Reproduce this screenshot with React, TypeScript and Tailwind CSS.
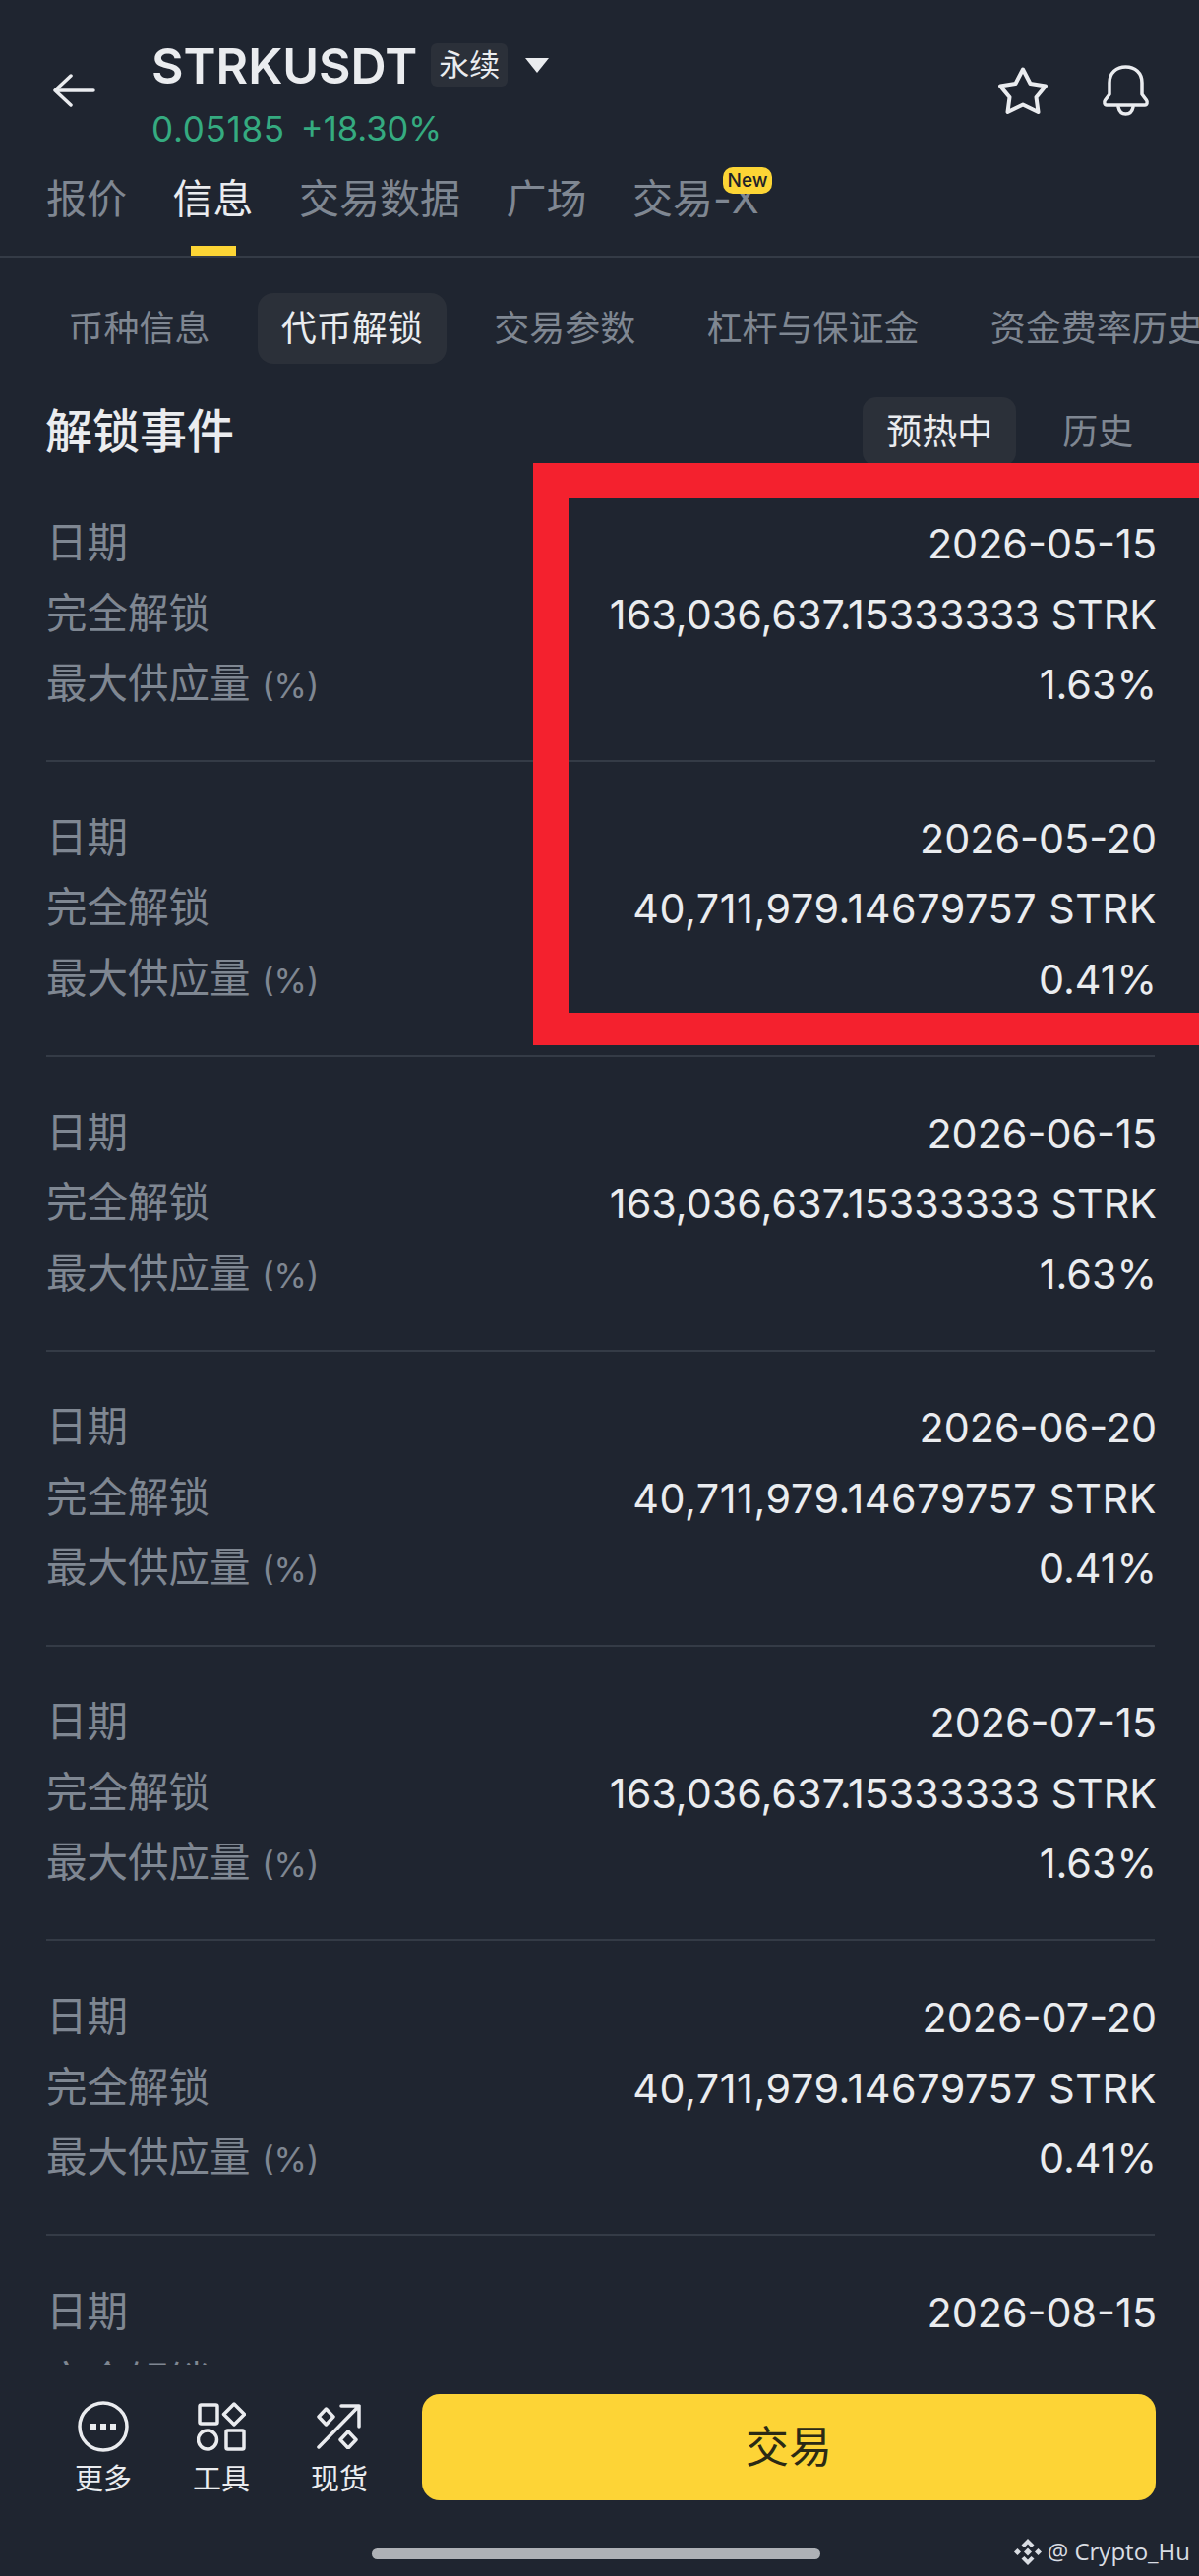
import React from 'react';

const unlocks = [
  { date: '2026-05-15', amount: '163,036,637.15333333 STRK', pct: '1.63%' },
  { date: '2026-05-20', amount: '40,711,979.14679757 STRK', pct: '0.41%' },
  { date: '2026-06-15', amount: '163,036,637.15333333 STRK', pct: '1.63%' },
  { date: '2026-06-20', amount: '40,711,979.14679757 STRK', pct: '0.41%' },
  { date: '2026-07-15', amount: '163,036,637.15333333 STRK', pct: '1.63%' },
  { date: '2026-07-20', amount: '40,711,979.14679757 STRK', pct: '0.41%' },
  { date: '2026-08-15', amount: '163,036,637.15333333 STRK', pct: '1.63%' },
];

const UnlockRow = ({ date, amount, pct }: { date: string; amount: string; pct: string }) => (
  <div className="mr-[45px] ml-[47px] border-b-2 border-[#343b46] py-[41.65px] text-[41.5px] leading-[71.5px]">
    <div className="flex justify-between">
      <span className="text-[#7f8792]">日期</span>
      <span className="mr-[-2px] translate-y-px text-[41.3px] text-[#eaecef]">{date}</span>
    </div>
    <div className="flex justify-between">
      <span className="text-[#7f8792]">完全解锁</span>
      {/* the ones in this figure run narrow in Inter, so it gets a little tracking */}
      <span className={`mr-[-2px] translate-y-px text-[41.3px] text-[#eaecef] ${amount.startsWith('40') ? 'tracking-[0.55px]' : ''}`}>{amount}</span>
    </div>
    <div className="flex justify-between">
      <span className="text-[#7f8792]">
        最大供应量 <span className="text-[34px] leading-none">(%)</span>
      </span>
      <span className="mr-[-2px] translate-y-px text-[41.3px] text-[#eaecef]">{pct}</span>
    </div>
  </div>
);

const BottomItem = ({ label, icon }: { label: string; icon: React.ReactNode }) => (
  <div className="flex w-[60px] flex-col items-center">
    <div className="flex h-[52px] items-center justify-center">{icon}</div>
    <span className="mt-[10px] text-[29px] leading-[36px] whitespace-nowrap text-[#eaecef]">{label}</span>
  </div>
);

export default function App() {
  return (
    <div className="relative flex h-[2620px] flex-col overflow-hidden bg-[#1f2530] font-['Inter','Noto_Sans_CJK_SC',sans-serif]">
      {/* header */}
      <div className="flex pt-[44px] pl-[53px]">
        <svg className="mt-[31px]" width="44" height="34" viewBox="0 0 44 34" fill="none" stroke="#eaecef" strokeWidth="3.5" strokeLinecap="round" strokeLinejoin="round">
          <path d="M42 17H3M19 2L3 17L19 32" />
        </svg>
        <div className="ml-[57px]">
          <div className="flex h-[44px] items-center">
            <span className="relative top-[1px] text-[50px] leading-[44px] font-semibold text-[#eaecef]">STRKUSDT</span>
            <span className="ml-[14px] flex h-[44px] w-[78px] items-center justify-center rounded-[6px] bg-[#2b3039] text-[31px] text-[#eaecef]">永续</span>
            <svg className="ml-[17px]" width="26" height="17" viewBox="0 0 26 17" fill="#eaecef">
              <path d="M1 1H25L13 16Z" />
            </svg>
          </div>
          <div className="mt-[27px] flex items-center gap-[16px] text-[#35ab80]">
            <span className="text-[35px] leading-[32px] tracking-[0.7px]">0.05185</span>
            <span className="text-[34.5px] leading-[32px]">+18.30%</span>
          </div>
        </div>
        <svg className="mt-[24px] ml-auto" width="50" height="49" viewBox="0 0 50 49" fill="none" stroke="#eaecef" strokeWidth="4" strokeLinejoin="round">
          <path d="M25 2.500L32.500 17L48 19.500L38.500 31L40.500 46L25 38.500L9.500 46L11.500 31L2 19.500L17.500 17Z" />
        </svg>
        <svg className="mt-[22px] mr-[50px] ml-[55px]" width="49" height="52" viewBox="0 0 49 52" fill="none" stroke="#eaecef" strokeWidth="3.5" strokeLinecap="round" strokeLinejoin="round">
          <path d="M5 41C3 41 2 38 3.500 36L8 30V18C8 8 15 2 24.500 2C34 2 41 8 41 18V30L45.500 36C47 38 46 41 44 41Z" />
          <path d="M17 43C18 48 21 50 24.500 50C28 50 31 48 32 43" />
        </svg>
      </div>

      {/* main tabs */}
      <div className="mt-[30px] flex h-[85px] gap-[46.5px] border-b-2 border-[#343b46] pl-[47px] text-[41px] leading-[50px] text-[#7f8792]">
        <span>报价</span>
        <div className="flex flex-col items-center">
          <span className="text-[#eaecef]">信息</span>
          <div className="mt-[23px] h-[11px] w-[46px] bg-[#fcd535]" />
        </div>
        <span>交易数据</span>
        <span>广场</span>
        <div className="relative">
          <span>交易-X</span>
          <span className="absolute top-[-7px] left-[92px] flex h-[27px] w-[50px] items-center justify-center rounded-[10px] bg-[#fcd535] text-[19px] font-medium text-[#1e2329]">New</span>
        </div>
      </div>

      {/* sub tabs */}
      <div className="mt-[36px] flex h-[72px] gap-[24.3px] overflow-hidden pl-[45.5px] text-[36px] leading-[72px] whitespace-nowrap text-[#7f8792]">
        <span className="px-6">币种信息</span>
        <span className="rounded-[16px] bg-[#2b3039] px-6 text-[#eaecef]">代币解锁</span>
        <span className="px-6">交易参数</span>
        <span className="px-6">杠杆与保证金</span>
        <span className="px-6">资金费率历史</span>
      </div>

      {/* section title */}
      <div className="mt-[34px] flex h-[70px] items-center justify-between pr-[42.7px] pl-[46px]">
        <span className="text-[48px] font-medium text-[#eaecef]">解锁事件</span>
        <div className="flex gap-[23px] text-[36px] leading-[70px]">
          <span className="rounded-[14px] bg-[#2b3039] px-6 text-[#eaecef]">预热中</span>
          <span className="px-6 text-[#7f8792]">历史</span>
        </div>
      </div>

      {/* list, cut off by the bottom bar */}
      <div className="mt-[1.5px] min-h-0 flex-1 overflow-hidden">
        {unlocks.map((u) => (
          <UnlockRow key={u.date} date={u.date} amount={u.amount} pct={u.pct} />
        ))}
      </div>

      {/* bottom bar */}
      <div className="relative h-[215px] shrink-0 bg-[#1f2530] pt-[30px]">
        <div className="flex items-start pr-[44px] pl-[75px]">
          <div className="mt-[7px] flex gap-[60px]">
            <BottomItem
              label="更多"
              icon={
                <svg width="52" height="52" viewBox="0 0 52 52" fill="none" stroke="#eaecef" strokeWidth="3.5">
                  <circle cx="26" cy="26" r="24" />
                  <rect x="13" y="23" width="6" height="6" fill="#eaecef" stroke="none" />
                  <rect x="23" y="23" width="6" height="6" fill="#eaecef" stroke="none" />
                  <rect x="33" y="23" width="6" height="6" fill="#eaecef" stroke="none" />
                </svg>
              }
            />
            <BottomItem
              label="工具"
              icon={
                <svg width="50" height="50" viewBox="0 0 50 50" fill="none" stroke="#eaecef" strokeWidth="3.5" strokeLinejoin="round">
                  <rect x="3" y="3" width="18" height="19" rx="1.500" />
                  <path d="M38 2L48.500 12.500L38 23L27.500 12.500Z" />
                  <circle cx="11" cy="38.500" r="9.500" />
                  <rect x="30" y="29" width="18" height="19" rx="1.500" />
                </svg>
              }
            />
            <BottomItem
              label="现货"
              icon={
                <svg width="46" height="46" viewBox="0 0 46 46" fill="none" stroke="#eaecef" strokeWidth="3.5" strokeLinecap="round" strokeLinejoin="round">
                  <path d="M2 44L43 2M25 2H43V23" />
                  <path d="M9.500 5L17 13L9.500 21L2 13Z" />
                  <path d="M32 28L40 36.500L32 45L24 36.500Z" />
                </svg>
              }
            />
          </div>
          <button className="ml-auto flex h-[108px] w-[746px] items-center justify-center rounded-[18px] bg-[#fdd436] text-[44px] text-[#2b2a15]">交易</button>
        </div>
        <div className="absolute bottom-[17px] left-[378px] h-[11px] w-[456px] rounded-full bg-[#aeb1b6]" />
        <div className="absolute right-[9px] bottom-[10px] flex items-center gap-[6px] font-['Open_Sans','Noto_Sans',sans-serif] text-[24px] leading-[30px] text-[#d9dde3]">
          <svg width="28" height="27" viewBox="0 0 28 27" fill="#d9dde3">
            <path d="M14 0L20.500 6.500L17.500 9L14 5.500L10.500 9L7.500 6.500Z" />
            <path d="M14 27L20.500 20.500L17.500 18L14 21.500L10.500 18L7.500 20.500Z" />
            <path d="M3.500 10L7 13.500L3.500 17L0 13.500Z" />
            <path d="M24.500 10L28 13.500L24.500 17L21 13.500Z" />
            <path d="M14 9.500L18 13.500L14 17.500L10 13.500Z" />
          </svg>
          <span>@ Crypto_Hu</span>
        </div>
      </div>

      {/* red highlight drawn over the screenshot */}
      <div className="absolute top-[471px] right-0 left-[542px] h-[592px] border-t-[35px] border-b-[33px] border-l-[36px] border-[#f4212e]" />
    </div>
  );
}
